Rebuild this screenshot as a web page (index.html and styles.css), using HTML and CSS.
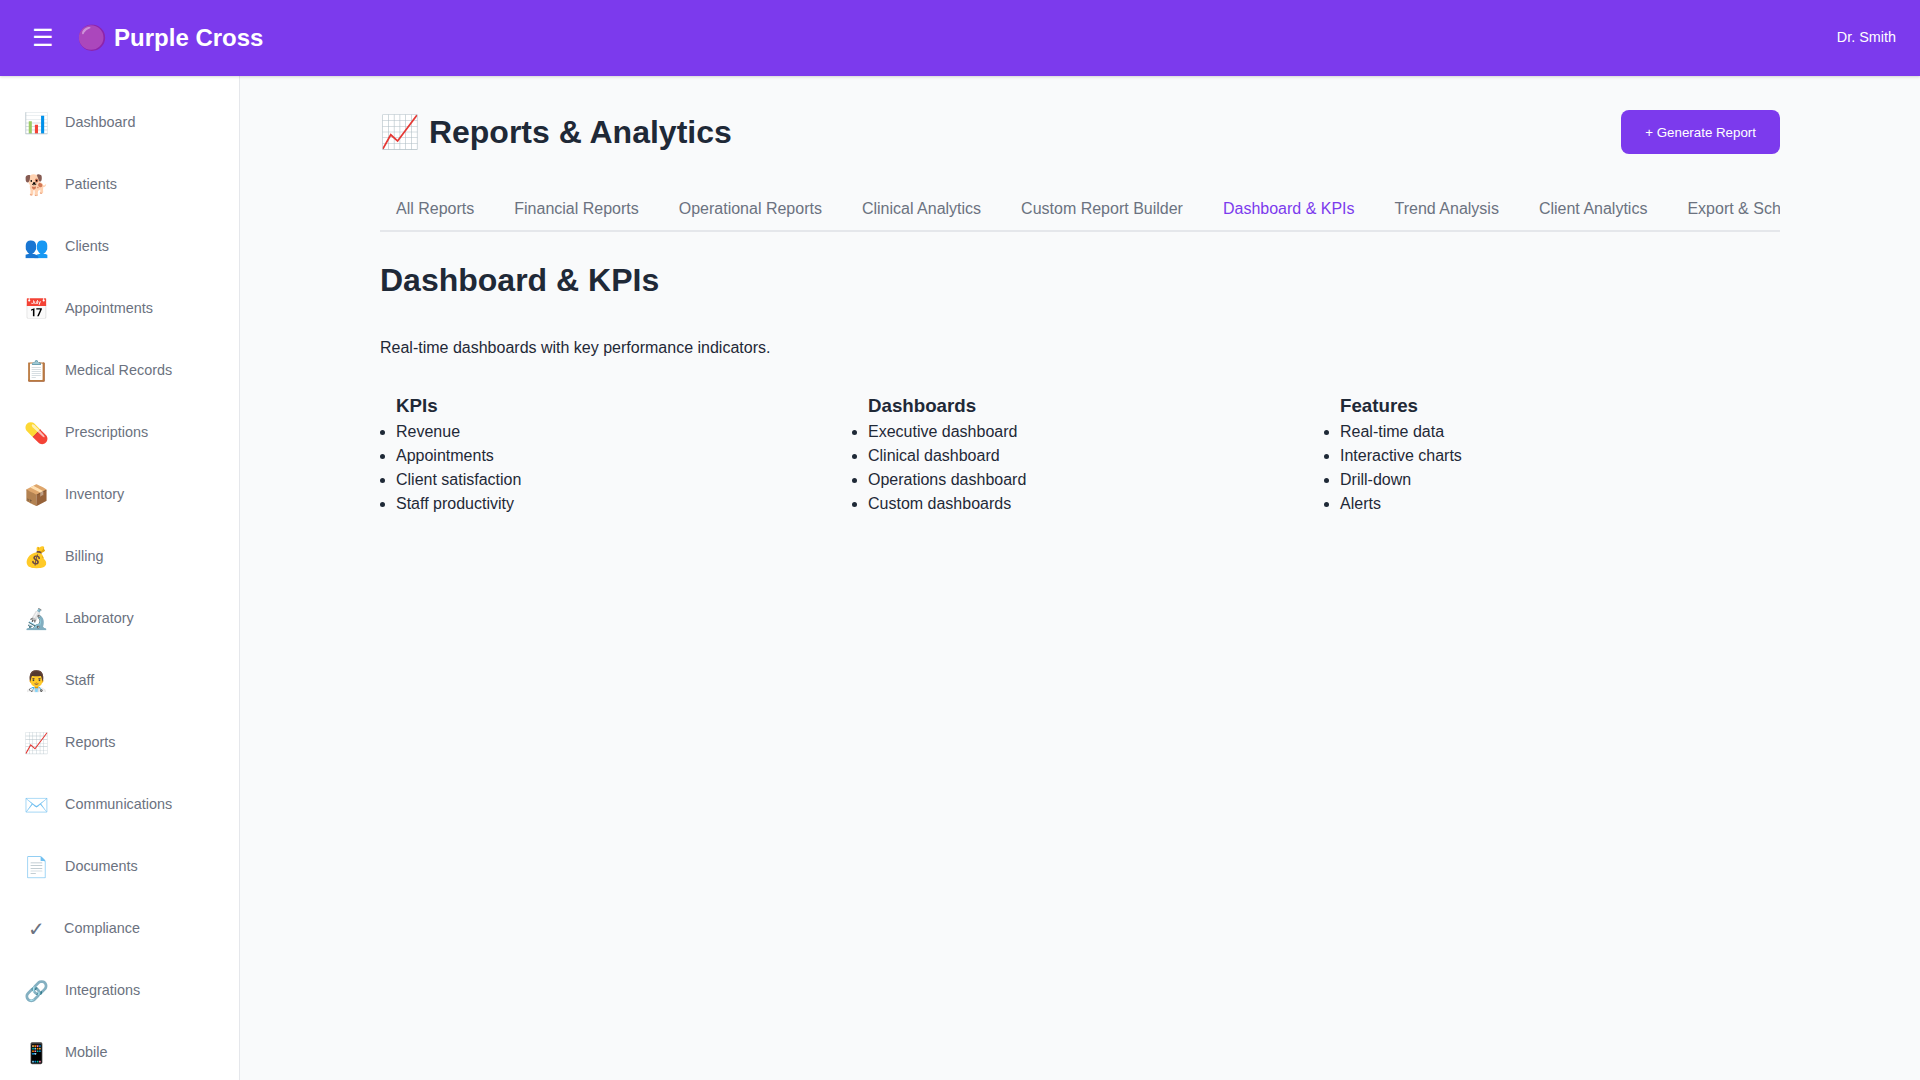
FILE: index.html
```html
<!DOCTYPE html>
<html lang="en">
<head>
<meta charset="UTF-8">
<title>Purple Cross</title>
<link rel="stylesheet" href="styles.css">
</head>
<body>
<header class="navbar">
  <div class="brand-group">
    <button class="menu-toggle" aria-label="Toggle menu">☰</button>
    <div class="brand">🟣 Purple Cross</div>
  </div>
  <div class="user">Dr. Smith</div>
</header>
<div class="layout">
  <nav class="sidebar">
    <a class="item"><span class="icon">📊</span><span>Dashboard</span></a>
    <a class="item"><span class="icon">🐕</span><span>Patients</span></a>
    <a class="item"><span class="icon">👥</span><span>Clients</span></a>
    <a class="item"><span class="icon">📅</span><span>Appointments</span></a>
    <a class="item"><span class="icon">📋</span><span>Medical Records</span></a>
    <a class="item"><span class="icon">💊</span><span>Prescriptions</span></a>
    <a class="item"><span class="icon">📦</span><span>Inventory</span></a>
    <a class="item"><span class="icon">💰</span><span>Billing</span></a>
    <a class="item"><span class="icon">🔬</span><span>Laboratory</span></a>
    <a class="item"><span class="icon">👨‍⚕️</span><span>Staff</span></a>
    <a class="item"><span class="icon">📈</span><span>Reports</span></a>
    <a class="item"><span class="icon">✉️</span><span>Communications</span></a>
    <a class="item"><span class="icon">📄</span><span>Documents</span></a>
    <a class="item"><span class="icon">✓</span><span>Compliance</span></a>
    <a class="item"><span class="icon">🔗</span><span>Integrations</span></a>
    <a class="item"><span class="icon">📱</span><span>Mobile</span></a>
  </nav>
  <main class="main">
    <div class="page">
      <div class="page-header">
        <h1>📈 Reports &amp; Analytics</h1>
        <button class="primary">+ Generate Report</button>
      </div>
      <div class="tabs">
        <button class="tab">All Reports</button>
        <button class="tab">Financial Reports</button>
        <button class="tab">Operational Reports</button>
        <button class="tab">Clinical Analytics</button>
        <button class="tab">Custom Report Builder</button>
        <button class="tab active">Dashboard &amp; KPIs</button>
        <button class="tab">Trend Analysis</button>
        <button class="tab">Client Analytics</button>
        <button class="tab">Export &amp; Scheduling</button>
      </div>
      <h1 class="section-title">Dashboard &amp; KPIs</h1>
      <p class="intro">Real-time dashboards with key performance indicators.</p>
      <div class="features">
        <section class="feature">
          <h3>KPIs</h3>
          <ul><li>Revenue</li><li>Appointments</li><li>Client satisfaction</li><li>Staff productivity</li></ul>
        </section>
        <section class="feature">
          <h3>Dashboards</h3>
          <ul><li>Executive dashboard</li><li>Clinical dashboard</li><li>Operations dashboard</li><li>Custom dashboards</li></ul>
        </section>
        <section class="feature">
          <h3>Features</h3>
          <ul><li>Real-time data</li><li>Interactive charts</li><li>Drill-down</li><li>Alerts</li></ul>
        </section>
      </div>
    </div>
  </main>
</div>
</body>
</html>
```

FILE: styles.css
```css
* { box-sizing: border-box; margin: 0; padding: 0; }
body {
  height: 100vh;
  overflow: hidden;
  display: flex;
  flex-direction: column;
  font-family: "Liberation Sans", Arial, sans-serif;
  font-size: 16px;
  line-height: 1.5;
  color: #1f2937;
  background: #f9fafb;
}
button { font-family: inherit; border: none; background: none; cursor: pointer; }
.navbar {
  flex: none;
  z-index: 10;
  display: flex;
  justify-content: space-between;
  align-items: center;
  height: 76px;
  padding: 0 24px;
  color: #fff;
  background: #7c3aed;
  box-shadow: 0 1px 3px rgba(0, 0, 0, 0.1), 0 1px 2px rgba(0, 0, 0, 0.06);
}
.brand-group { display: flex; align-items: center; gap: 15.4px; }
.menu-toggle { padding: 8px; font-size: 24px; color: #fff; }
.brand { font-size: 24px; font-weight: bold; }
.user { font-size: 14.4px; }
.layout { flex: 1; display: flex; min-height: 0; }
.sidebar {
  flex: none;
  width: 240px;
  padding: 16px 0;
  overflow: hidden;
  border-right: 1px solid #e5e7eb;
  background: #fff;
}
.item {
  display: flex;
  align-items: center;
  gap: 16px;
  height: 62px;
  padding: 0 24px;
  font-size: 14.4px;
  color: #6b7280;
}
.icon { min-width: 24px; font-size: 20px; text-align: center; }
.main { flex: 1; min-width: 0; padding: 32px; }
.page { max-width: 1400px; margin: 0 auto; }
.page-header { display: flex; justify-content: space-between; align-items: center; margin-bottom: 32px; }
h1 { font-size: 32px; line-height: 48px; }
.primary {
  min-height: 44px;
  padding: 12px 24px;
  border-radius: 8px;
  font-size: 13.333px;
  color: #fff;
  background: #7c3aed;
}
.tabs {
  display: flex;
  gap: 8px;
  overflow: hidden;
  margin-bottom: 24px;
  border-bottom: 2px solid #e5e7eb;
}
.tab { flex: none; padding: 12px 16px; font-size: 16px; color: #6b7280; }
.tab.active { color: #7c3aed; }
.section-title { margin-bottom: 32px; }
.intro { margin-bottom: 32px; }
.features { display: grid; grid-template-columns: repeat(3, 1fr); gap: 16px; }
.feature { padding: 0 16px; }
h3 { font-size: 18.72px; line-height: 28px; }
```
